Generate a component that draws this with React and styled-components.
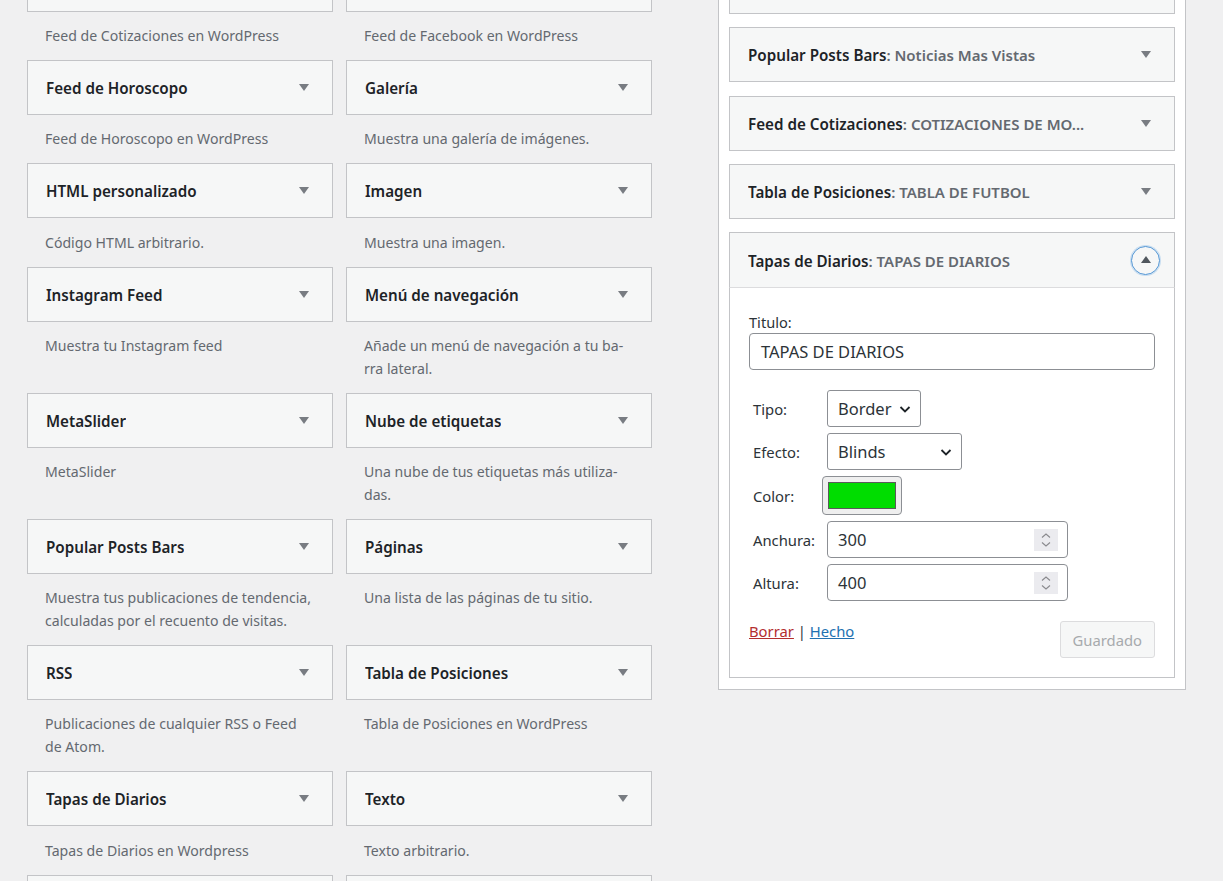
import React from 'react'
import styled, { createGlobalStyle } from 'styled-components'

const GlobalStyle = createGlobalStyle`
  html, body {
    margin: 0;
    padding: 0;
    background: #f0f0f1;
    overflow: hidden;
  }
  body {
    font-family: 'Noto Sans', 'Open Sans', 'Liberation Sans', sans-serif;
    color: #1d2327;
  }
`

const Page = styled.div`
  display: flex;
  align-items: flex-start;
  gap: 66px;
  padding-left: 27px;
  height: 881px;
  overflow: hidden;
`

const WidgetGrid = styled.div`
  display: grid;
  grid-template-columns: 306px 306px;
  column-gap: 13px;
  margin-top: -43px;
`

const Cell = styled.div`
  display: flex;
  flex-direction: column;
`

const Header = styled.div`
  box-sizing: border-box;
  height: ${(p) => p.$height || 55}px;
  display: flex;
  align-items: center;
  justify-content: space-between;
  padding: 0 23px 0 18px;
  background: #f6f7f7;
  border: 1px solid #c3c4c7;
  ${(p) => p.$open && 'border-bottom: 1px solid #dcdcde;'}
`

const Title = styled.h3`
  margin: 0;
  padding-top: 1px;
  font-size: 15.2px;
  font-weight: 600;
  color: #1d2327;
  white-space: nowrap;
  overflow: hidden;
`

const InTitle = styled.span`
  color: #646970;
  font-size: 15px;
  font-weight: 600;
`

const Arrow = styled.span`
  width: 0;
  height: 0;
  border-left: 5px solid transparent;
  border-right: 5px solid transparent;
  border-top: 7px solid #787c82;
  flex-shrink: 0;
`

const OpenToggle = styled.span`
  box-sizing: border-box;
  width: 29px;
  height: 29px;
  margin-right: -9px;
  border-radius: 50%;
  border: 1.5px solid #4f94d4;
  box-shadow: 0 0 0 1px rgba(114, 174, 230, 0.35);
  display: flex;
  align-items: center;
  justify-content: center;
  flex-shrink: 0;

  &::after {
    content: '';
    width: 0;
    height: 0;
    margin-top: -2px;
    border-left: 5px solid transparent;
    border-right: 5px solid transparent;
    border-bottom: 7px solid #50575e;
  }
`

const Desc = styled.p`
  margin: 0;
  padding: 12.2px 18px 13px 18px;
  font-size: 14.1px;
  line-height: 23px;
  color: #646970;
`

const Sidebar = styled.div`
  box-sizing: border-box;
  width: 468px;
  margin-top: -53px;
  background: #fff;
  border: 1px solid #c3c4c7;
  padding: 11px 10px 11px 10px;
  display: flex;
  flex-direction: column;
  gap: 13.3px;
`

const Panel = styled.div`
  display: flex;
  flex-direction: column;
`

const Body = styled.div`
  border: 1px solid #c3c4c7;
  border-top: none;
  background: #fff;
  padding: 24px 19px 19px 19px;
`

const FieldLabel = styled.label`
  display: block;
  font-size: 14.6px;
  line-height: 20px;
  color: #2c3338;
  margin-bottom: 1px;
`

const TextInput = styled.div`
  box-sizing: border-box;
  height: 37px;
  border: 1px solid #8c8f94;
  border-radius: 4px;
  padding: 0 11px;
  display: flex;
  align-items: center;
  font-size: 16.5px;
  color: #2c3338;
`

const OptionsTable = styled.div`
  display: grid;
  grid-template-columns: 74px auto;
  align-items: center;
  row-gap: 6px;
  margin: 20px 0 0 4px;
  justify-items: start;
`

const OptionLabel = styled.span`
  font-size: 14.8px;
  color: #2c3338;
`

const Select = styled.div`
  box-sizing: border-box;
  width: ${(p) => p.$width}px;
  height: 37px;
  border: 1px solid #8c8f94;
  border-radius: 3px;
  padding: 0 8px 0 10px;
  display: flex;
  align-items: center;
  justify-content: space-between;
  font-size: 16.5px;
  color: #2c3338;
`

const Swatch = styled.div`
  box-sizing: border-box;
  width: 80px;
  height: 39px;
  margin-left: -5px;
  background: #efefef;
  border: 1px solid #8c8f94;
  border-radius: 4px;
  padding: 5px;

  &::after {
    content: '';
    display: block;
    height: 100%;
    box-sizing: border-box;
    background: ${(p) => p.$color};
    border: 1px solid #5a5a5a;
  }
`

const NumberInput = styled.div`
  box-sizing: border-box;
  width: 241px;
  height: 37px;
  border: 1px solid #8c8f94;
  border-radius: 4px;
  padding: 0 9px 0 10px;
  display: flex;
  align-items: center;
  justify-content: space-between;
  font-size: 16.5px;
  color: #2c3338;
`

const Spinner = styled.span`
  width: 24px;
  height: 22px;
  background: #ebebef;
  display: flex;
  align-items: center;
  justify-content: center;
`

const Footer = styled.div`
  display: flex;
  justify-content: space-between;
  align-items: flex-start;
  margin-top: 20px;
`

const Links = styled.div`
  font-size: 14.8px;
  color: #2c3338;
  padding-top: 0;
`

const Link = styled.a`
  color: ${(p) => (p.$danger ? '#b32d2e' : '#2271b1')};
  text-decoration: underline;
`

const SaveButton = styled.button`
  box-sizing: border-box;
  height: 37px;
  padding: 0 12px;
  background: #f6f7f7;
  border: 1px solid #dcdcde;
  border-radius: 3px;
  color: #a7aaad;
  font-family: inherit;
  font-size: 14.8px;
`

const Chevron = () => (
  <svg width="14" height="14" viewBox="0 0 14 14">
    <path d="M2.5 5l4.5 4.5L11.5 5" fill="none" stroke="#1d2327" strokeWidth="1.8" />
  </svg>
)

const SpinIcon = () => (
  <Spinner>
    <svg width="12" height="18" viewBox="0 0 12 18">
      <path d="M2 6.5L6 3l4 3.5M2 11.5L6 15l4-3.5" fill="none" stroke="#8a8a8e" strokeWidth="1.1" />
    </svg>
  </Spinner>
)

const available = [
  ['', 'Feed de Cotizaciones en WordPress'],
  ['', 'Feed de Facebook en WordPress'],
  ['Feed de Horoscopo', 'Feed de Horoscopo en WordPress'],
  ['Galería', 'Muestra una galería de imágenes.'],
  ['HTML personalizado', 'Código HTML arbitrario.'],
  ['Imagen', 'Muestra una imagen.'],
  ['Instagram Feed', 'Muestra tu Instagram feed'],
  ['Menú de navegación', ['Añade un menú de navegación a tu ba-', 'rra lateral.']],
  ['MetaSlider', 'MetaSlider'],
  ['Nube de etiquetas', ['Una nube de tus etiquetas más utiliza-', 'das.']],
  ['Popular Posts Bars', ['Muestra tus publicaciones de tendencia,', 'calculadas por el recuento de visitas.']],
  ['Páginas', 'Una lista de las páginas de tu sitio.'],
  ['RSS', ['Publicaciones de cualquier RSS o Feed', 'de Atom.']],
  ['Tabla de Posiciones', 'Tabla de Posiciones en WordPress'],
  ['Tapas de Diarios', 'Tapas de Diarios en Wordpress'],
  ['Texto', 'Texto arbitrario.'],
  ['', ''],
  ['', ''],
]

const placed = [
  ['Popular Posts Bars', 'Noticias Mas Vistas'],
  ['Feed de Cotizaciones', 'COTIZACIONES DE MO...'],
  ['Tabla de Posiciones', 'TABLA DE FUTBOL'],
]

const renderDesc = (d) =>
  Array.isArray(d) ? d.map((line, i) => <React.Fragment key={i}>{i > 0 && <br />}{line}</React.Fragment>) : d

const App = () => {
  return (
    <>
      <GlobalStyle />
      <Page>
        <WidgetGrid>
          {available.map(([name, desc], i) => (
            <Cell key={i}>
              <Header>
                <Title>{name}</Title>
                <Arrow />
              </Header>
              {desc && <Desc>{renderDesc(desc)}</Desc>}
            </Cell>
          ))}
        </WidgetGrid>

        <Sidebar>
          <Header>
            <Title />
            <Arrow />
          </Header>
          {placed.map(([name, sub]) => (
            <Header key={name}>
              <Title>
                {name}<InTitle>: {sub}</InTitle>
              </Title>
              <Arrow />
            </Header>
          ))}
          <Panel>
            <Header $open $height={56}>
              <Title>
                Tapas de Diarios<InTitle>: TAPAS DE DIARIOS</InTitle>
              </Title>
              <OpenToggle />
            </Header>
            <Body>
              <FieldLabel>Titulo:</FieldLabel>
              <TextInput>TAPAS DE DIARIOS</TextInput>
              <OptionsTable>
                <OptionLabel>Tipo:</OptionLabel>
                <Select $width={94}>
                  Border <Chevron />
                </Select>
                <OptionLabel>Efecto:</OptionLabel>
                <Select $width={135}>
                  Blinds <Chevron />
                </Select>
                <OptionLabel>Color:</OptionLabel>
                <Swatch $color="#00dd00" />
                <OptionLabel>Anchura:</OptionLabel>
                <NumberInput>
                  300 <SpinIcon />
                </NumberInput>
                <OptionLabel>Altura:</OptionLabel>
                <NumberInput>
                  400 <SpinIcon />
                </NumberInput>
              </OptionsTable>
              <Footer>
                <Links>
                  <Link $danger href="#">Borrar</Link> | <Link href="#">Hecho</Link>
                </Links>
                <SaveButton disabled>Guardado</SaveButton>
              </Footer>
            </Body>
          </Panel>
        </Sidebar>
      </Page>
    </>
  )
}

export default App
